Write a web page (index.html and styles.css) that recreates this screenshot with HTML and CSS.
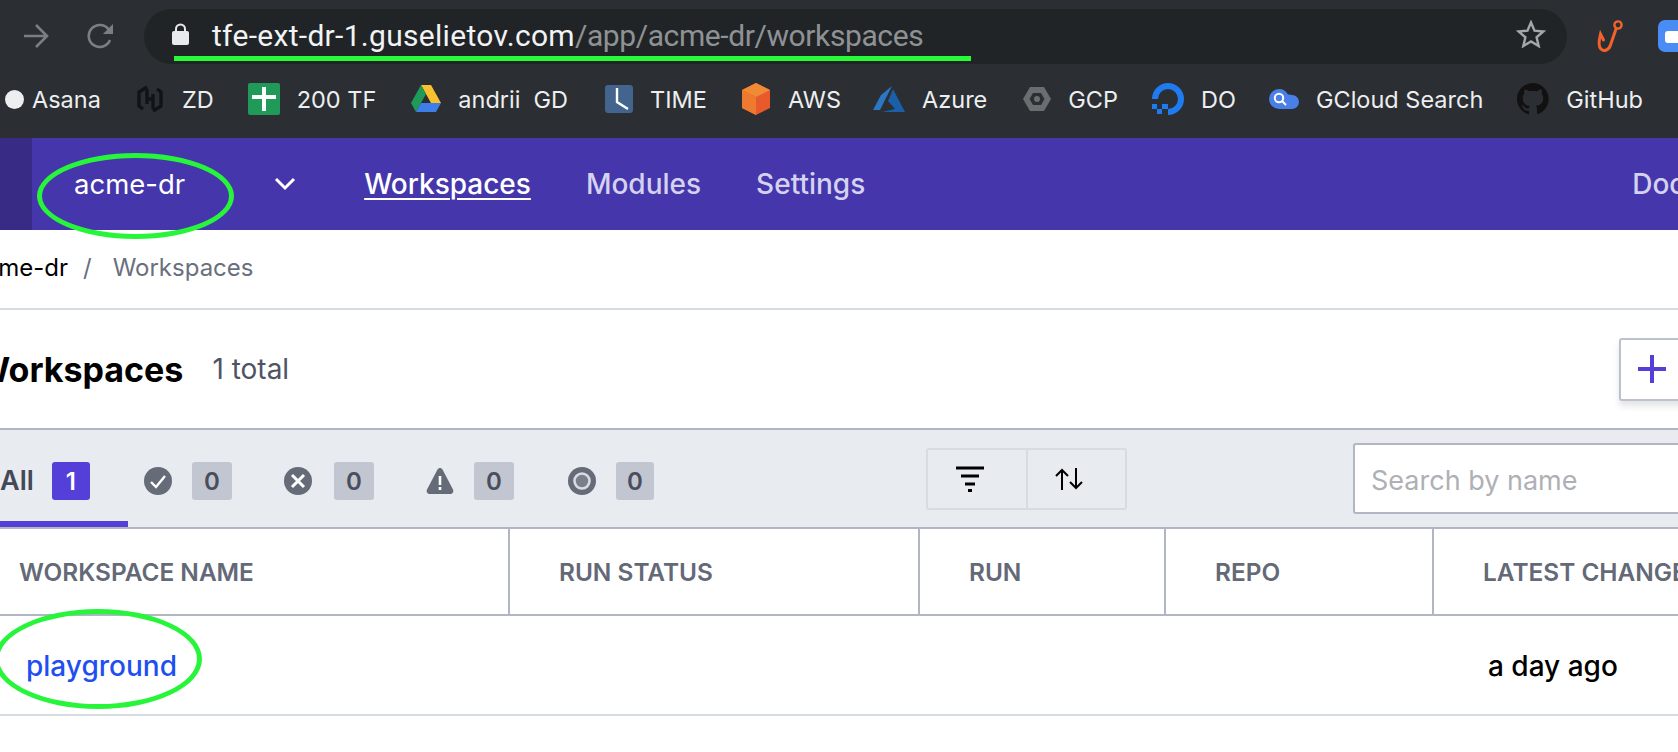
FILE: index.html
```html
<!DOCTYPE html>
<html lang="en">
<head>
    <meta charset="UTF-8">
    <meta name="viewport" content="width=device-width, initial-scale=1.0">
    <title>Workspaces</title>
    <link rel="stylesheet" href="styles.css">
</head>
<body>
    <header class="browser">
        <div class="toolbar">
            <svg class="tool-icon" width="28" height="26" viewBox="0 0 28 26"><path d="M2 13h23M14 2l11 11-11 11" fill="none" stroke="#7c7f82" stroke-width="2.6"/></svg>
            <svg class="tool-icon reload" width="28" height="26" viewBox="0 0 28 26"><path d="M23 17a11 11 0 1 1-1-10" fill="none" stroke="#7c7f82" stroke-width="2.6"/><path d="M26 1v10H16z" fill="#7c7f82"/></svg>
            <div class="urlbar">
                <svg class="lock" width="17" height="22" viewBox="0 0 17 22"><path d="M4 9V6a4.500 4.500 0 0 1 9 0v3" fill="none" stroke="#e8eaed" stroke-width="2"/><rect y="8" width="17" height="14" rx="2" fill="#e8eaed"/></svg>
                <span class="url"><span class="host">tfe-ext-dr-1.guselietov.com</span><span class="path">/app/acme-dr/workspaces</span></span>
                <svg class="star" width="30" height="28" viewBox="0 0 24 23"><path d="M12 2l2.900 6.800 7.300.6-5.600 4.800 1.700 7.200-6.300-3.800-6.300 3.800 1.700-7.200L1.800 9.400l7.300-.6z" fill="none" stroke="#a4a7aa" stroke-width="2"/></svg>
                <i class="url-mark"></i>
            </div>
            <svg class="hook" width="28" height="34" viewBox="0 0 28 34"><circle cx="23" cy="5" r="3.600" fill="none" stroke="#f2622a" stroke-width="2.400"/><path d="M21 9l-5.500 16c-1.500 5-6.500 7-9.500 4-3-2.500-2-9-.500-15l3 6" fill="none" stroke="#f2622a" stroke-width="3" stroke-linecap="round"/></svg>
            <div class="zoom-ext"><i></i></div>
        </div>
        <nav class="bookmarks">
            <a class="bm bm-asana"><i class="dot"></i>Asana</a>
            <a class="bm bm-zd"><svg width="30" height="30" viewBox="0 0 30 30"><path d="M12 3L4 8v14l4 3M12 5v15M18 10v15M12 15h6M18 27l8-5V8l-4-3" fill="none" stroke="#10141a" stroke-width="3.400"/></svg>ZD</a>
            <a class="bm bm-tf"><svg width="32" height="32" viewBox="0 0 32 32"><rect width="32" height="32" rx="2" fill="#1f9a58"/><path d="M4 12h24v4H4zM14 4h4v24h-4z" fill="#fff"/></svg>200 TF</a>
            <a class="bm bm-gd"><svg width="30" height="30" viewBox="0 0 30 30"><path d="M10 1h10l10 18H20z" fill="#fbc02d"/><path d="M10 1l5 9L5 28 0 19z" fill="#1f9a58"/><path d="M10 19h20l-5 9H5z" fill="#3f7ee8"/></svg>andrii&nbsp; GD</a>
            <a class="bm bm-time"><svg width="28" height="28" viewBox="0 0 28 28"><rect width="28" height="28" rx="3" fill="#43648c"/><path d="M12 3v14l11 7" fill="none" stroke="#fff" stroke-width="2.400"/></svg>TIME</a>
            <a class="bm bm-aws"><svg width="30" height="32" viewBox="0 0 30 32"><path d="M15 0l14 7v18l-14 7-14-7V7z" fill="#e85a2b"/><path d="M15 0l14 7-14 7L1 7z" fill="#f18a34"/><path d="M15 14v18L1 25V7z" fill="#ee7a30"/></svg>AWS</a>
            <a class="bm bm-azure"><svg width="32" height="26" viewBox="0 0 32 26"><path d="M19 0L8 9 0 24h7z" fill="#2b77c4"/><path d="M20 3l12 23H9l13-3-7-8z" fill="#1a5fa8"/></svg>Azure</a>
            <a class="bm bm-gcp"><svg width="28" height="26" viewBox="0 0 28 26"><path d="M7 1h14l7 12-7 12H7L0 13zM10 7l-3.500 6L10 19h8l3.500-6L18 7z" fill="#6b6e71" fill-rule="evenodd"/><circle cx="14" cy="13" r="3" fill="#6b6e71"/></svg>GCP</a>
            <a class="bm bm-do"><svg width="32" height="32" viewBox="0 0 32 32"><path d="M16 32v-6a10 10 0 1 0-10-10H0a16 16 0 1 1 16 16z" fill="#1f7cf0"/><path d="M16 26h-6v-5h6zM10 31H5v-5h5zM5 26H0v-5h5z" fill="#1f7cf0"/></svg>DO</a>
            <a class="bm bm-gs"><svg width="30" height="20" viewBox="0 0 30 20"><path d="M10 0a10 10 0 0 1 9 5.600A7 7 0 0 1 23 6a7 7 0 0 1 0 14H10a10 10 0 0 1 0-20z" fill="#4a7fe8"/><circle cx="10" cy="9" r="4.200" fill="none" stroke="#fff" stroke-width="2"/><path d="M13 12l4 4" stroke="#fff" stroke-width="2"/></svg>GCloud Search</a>
            <a class="bm bm-gh"><svg width="32" height="32" viewBox="0 0 16 16"><path d="M8 0a8 8 0 0 0-2.500 15.600c.4.1.5-.2.500-.4v-1.400c-2.200.5-2.700-1-2.700-1-.4-.9-.9-1.200-.9-1.200-.7-.5.100-.5.100-.5.800.1 1.200.8 1.200.8.700 1.200 1.900.9 2.300.7.100-.5.300-.9.500-1.100-1.800-.2-3.600-.9-3.600-4 0-.9.300-1.600.8-2.100-.1-.2-.4-1 .1-2.100 0 0 .7-.2 2.200.8a7.600 7.600 0 0 1 4 0c1.500-1 2.200-.8 2.200-.8.400 1.100.2 1.900.1 2.100.5.600.8 1.300.8 2.100 0 3.100-1.900 3.700-3.700 3.900.3.300.6.800.6 1.500v2.200c0 .2.100.5.600.4A8 8 0 0 0 8 0z" fill="#111"/></svg>GitHub</a>
        </nav>
    </header>

    <div class="topbar">
        <div class="topbar-edge"></div>
        <span class="org">acme-dr</span>
        <svg class="chevron" width="22" height="14" viewBox="0 0 22 14"><path d="M2 2l9 9 9-9" fill="none" stroke="#fff" stroke-width="3"/></svg>
        <a class="nav-link active">Workspaces</a>
        <a class="nav-link">Modules</a>
        <a class="nav-link">Settings</a>
        <a class="nav-link docs">Docs</a>
    </div>

    <div class="crumbs"><span class="crumb-org">acme-dr</span><span class="crumb-sep">/</span><span class="crumb-page">Workspaces</span></div>

    <div class="title-row">
        <h1>Workspaces</h1>
        <span class="total">1 total</span>
        <button class="add-btn"><svg width="30" height="30" viewBox="0 0 30 30"><path d="M15 1v28M1 15h28" stroke="#5440d8" stroke-width="4"/></svg></button>
    </div>

    <div class="filters">
        <div class="tab tab-all"><span class="tab-label">All</span><span class="count count-on">1</span></div>
        <div class="tab tab-ok">
            <svg width="28" height="28" viewBox="0 0 28 28"><circle cx="14" cy="14" r="14" fill="#666b78"/><path d="M7 15l5 5 9-11" fill="none" stroke="#fff" stroke-width="2.400"/></svg>
            <span class="count">0</span>
        </div>
        <div class="tab tab-err">
            <svg width="28" height="28" viewBox="0 0 28 28"><circle cx="14" cy="14" r="14" fill="#666b78"/><path d="M8 8l12 12M20 8L8 20" stroke="#fff" stroke-width="3"/></svg>
            <span class="count">0</span>
        </div>
        <div class="tab tab-warn">
            <svg width="28" height="28" viewBox="0 0 28 28"><path d="M14 1c1 0 2 .6 2.500 1.500l10.500 20c1 2-.3 4.500-2.500 4.500h-21C1.300 27 0 24.500 1 22.500l10.500-20C12 1.600 13 1 14 1z" fill="#666b78"/><path d="M14 9v9M14 20v3" stroke="#fff" stroke-width="2.600"/></svg>
            <span class="count">0</span>
        </div>
        <div class="tab tab-idle">
            <svg width="28" height="28" viewBox="0 0 28 28"><circle cx="14" cy="14" r="14" fill="#666b78"/><circle cx="14" cy="14" r="7.500" fill="#7a7f8b" stroke="#d8dbe1" stroke-width="2.600"/></svg>
            <span class="count">0</span>
        </div>
        <div class="btn-group">
            <div class="btn-cell"><svg width="28" height="26" viewBox="0 0 28 26"><path d="M0 2h28M5 10h18M9 18h10" stroke="#000" stroke-width="3"/><path d="M12 24.500h4" stroke="#000" stroke-width="3"/></svg></div>
            <div class="btn-cell"><svg width="28" height="22" viewBox="0 0 28 22"><path d="M7 22V2M1 8l6-6 6 6M21 0v20M15 14l6 6 6-6" fill="none" stroke="#000" stroke-width="2"/></svg></div>
        </div>
        <input class="search" type="text" placeholder="Search by name">
    </div>

    <div class="table-head">
        <div class="th th-name">WORKSPACE NAME</div>
        <div class="th th-status">RUN STATUS</div>
        <div class="th th-run">RUN</div>
        <div class="th th-repo">REPO</div>
        <div class="th th-change">LATEST CHANGE</div>
    </div>
    <div class="table-row">
        <a class="ws-link">playground</a>
        <span class="changed">a day ago</span>
    </div>

    <!-- hand drawn marks on top of the screenshot -->
    <i class="ring ring-org"></i>
    <i class="ring ring-ws"></i>
</body>
</html>
```

FILE: styles.css
```css
* {
    box-sizing: border-box;
}
body {
    margin: 0;
    width: 1678px;
    height: 752px;
    overflow: hidden;
    position: relative;
    background: #fff;
    font-family: 'Inter', 'Liberation Sans', sans-serif;
    color: #000;
}
svg {
    flex-shrink: 0;
    display: block;
}

/* browser chrome */
.browser {
    height: 138px;
    background: #2b2e32;
    overflow: hidden;
}
.toolbar {
    height: 73px;
    padding: 9px 0 0 22px;
    display: flex;
    align-items: flex-start;
}
.tool-icon {
    margin-top: 14px;
}
.reload {
    margin-left: 37px;
}
.urlbar {
    position: relative;
    margin-left: 29px;
    width: 1423px;
    height: 55px;
    flex-shrink: 0;
    background: #212427;
    border-radius: 28px;
    display: flex;
    align-items: center;
    padding: 0 21px 0 28px;
}
.lock {
    margin-top: -6px;
}
.url {
    margin-left: 23px;
    margin-top: -2px;
    font-family: 'Roboto', sans-serif;
    font-size: 30px;
    color: #8f9295;
    white-space: nowrap;
}
.host {
    color: #f1f3f4;
    letter-spacing: 0.3px;
}
.path {
    letter-spacing: -0.4px;
}
.star {
    margin-left: auto;
    margin-top: -6px;
}
.url-mark {
    position: absolute;
    left: 30px;
    bottom: 3px;
    width: 797px;
    height: 5px;
    background: #27fb38;
}
.hook {
    margin-left: 28px;
    margin-top: 11px;
}
.zoom-ext {
    margin-left: 35px;
    margin-top: 11px;
    width: 50px;
    height: 32px;
    flex-shrink: 0;
    background: #4a8cf6;
    border-radius: 7px;
    padding: 11px 0 0 7px;
}
.zoom-ext i {
    display: block;
    width: 30px;
    height: 12px;
    background: #fff;
    border-radius: 3px;
}
.bookmarks {
    height: 65px;
    display: flex;
    align-items: flex-start;
    padding: 10px 0 0 5px;
    font-size: 23.500px;
    color: #eceef0;
    white-space: nowrap;
}
.bm {
    height: 32px;
    display: flex;
    align-items: center;
    flex-shrink: 0;
}
.dot {
    width: 19px;
    height: 19px;
    border-radius: 50%;
    background: #eceef0;
    margin-right: 8px;
}
.bm svg {
    margin-right: 17px;
}
.bm-zd { margin-left: 34px; }
.bm-tf { margin-left: 34px; }
.bm-gd { margin-left: 35px; }
.bm-time { margin-left: 37px; }
.bm-aws { margin-left: 34px; }
.bm-azure { margin-left: 32px; }
.bm-gcp { margin-left: 36px; }
.bm-do { margin-left: 34px; }
.bm-gs { margin-left: 33px; }
.bm-gh { margin-left: 34px; }

/* product nav */
.topbar {
    height: 92px;
    background: #4537ab;
    display: flex;
    align-items: center;
    font-size: 28px;
    font-weight: 500;
    white-space: nowrap;
}
.topbar-edge {
    width: 32px;
    height: 92px;
    background: #372b86;
    flex-shrink: 0;
}
.org {
    margin-left: 42px;
    color: #fff;
    font-size: 27.500px;
    font-weight: 400;
}
.chevron {
    margin-left: 89px;
}
.nav-link {
    margin-left: 55px;
    color: #d5d2f0;
    flex-shrink: 0;
}
.nav-link.active {
    margin-left: 68px;
    color: #fff;
    text-decoration: underline;
    text-underline-offset: 4px;
    text-decoration-thickness: 2px;
}
.nav-link.docs {
    margin-left: 767px;
}

/* page */
.crumbs {
    height: 80px;
    padding-left: 0;
    margin-left: -29px;
    display: flex;
    align-items: center;
    padding-bottom: 4px;
    font-size: 24px;
    width: 1707px;
    border-bottom: 2px solid #d7dbe2;
}
.crumb-sep {
    margin: 0 21px 0 15px;
    color: #6a6f7d;
}
.crumb-page {
    color: #6a6f7d;
}
.title-row {
    height: 118px;
    margin-left: -25px;
    width: 1760px;
    display: flex;
    align-items: center;
}
h1 {
    margin: 0;
    font-size: 34px;
    font-weight: 700;
}
.total {
    margin-left: 29px;
    font-size: 28px;
    color: #4f5463;
}
.add-btn {
    margin-left: 1330px;
    width: 80px;
    height: 63px;
    padding: 0 0 0 16px;
    background: #fff;
    border: 2px solid #bdc1cd;
    border-radius: 3px;
    box-shadow: 0 5px 6px rgba(60, 65, 80, 0.14);
}
.filters {
    height: 101px;
    display: flex;
    align-items: flex-start;
    background: #e8ebf0;
    border-top: 2px solid #b1b5c4;
    border-bottom: 2px solid #b1b5c4;
    position: relative;
}
.tab {
    display: flex;
    align-items: center;
    height: 38px;
    margin-top: 32px;
}
.tab-all {
    width: 128px;
    height: 97px;
    margin-top: 0;
    padding: 0 0 0 0;
    align-items: flex-start;
    border-bottom: 6px solid #5440d8;
    flex-shrink: 0;
}
.tab-label {
    margin: 34px 18px 0 0;
    font-size: 27px;
    font-weight: 600;
    color: #444857;
}
.count {
    width: 40px;
    height: 38px;
    border-radius: 3px;
    background: #c2c6d1;
    color: #4a4e5c;
    font-size: 24px;
    font-weight: 600;
    display: flex;
    align-items: center;
    justify-content: center;
}
.count-on {
    width: 38px;
    margin-top: 32px;
    background: #5440d8;
    color: #fff;
}
.tab svg {
    margin-right: 20px;
}
.tab-ok { margin-left: 16px; }
.tab-err { margin-left: 52px; }
.tab-err svg { margin-right: 22px; }
.tab-warn { margin-left: 52px; }
.tab-idle { margin-left: 54px; }
.tab-idle .count { width: 38px; }
.btn-group {
    margin: 18px 0 0 272px;
    width: 201px;
    height: 62px;
    flex-shrink: 0;
    display: flex;
    border: 2px solid #d7dbe2;
    border-radius: 3px;
}
.btn-cell {
    flex: 1;
    display: flex;
    align-items: center;
    justify-content: center;
    padding-right: 14px;
}
.btn-cell + .btn-cell {
    border-left: 2px solid #d7dbe2;
}
.search {
    margin: 13px 0 0 226px;
    width: 400px;
    height: 71px;
    flex-shrink: 0;
    padding: 3px 16px 0;
    border: 2px solid #b1b5c4;
    border-radius: 3px;
    background: #fff;
    font-family: inherit;
    font-size: 27px;
}
.search::placeholder {
    color: #aeb0b5;
}
.table-head {
    height: 87px;
    display: grid;
    grid-template-columns: 508px 410px 246px 268px 1fr;
    border-bottom: 2px solid #b1b5c4;
    font-size: 24.400px;
    font-weight: 600;
    color: #646978;
    white-space: nowrap;
    overflow: hidden;
}
.th {
    display: flex;
    align-items: center;
    padding-left: 49px;
    border-left: 2px solid #b1b5c4;
}
.th-name {
    padding-left: 19px;
    border-left: 0;
}
.table-row {
    height: 100px;
    display: flex;
    align-items: center;
    border-bottom: 2px solid #d7dbe2;
    padding-top: 1px;
    font-size: 28px;
    font-weight: 500;
}
.ws-link {
    margin-left: 26px;
    color: #1f4ff0;
}
.changed {
    margin-left: 1311px;
    color: #000;
}

/* green marker circles */
.ring {
    position: absolute;
    border: 5px solid #27f53a;
    border-radius: 50%;
}
.ring-org {
    left: 37px;
    top: 153px;
    width: 197px;
    height: 86px;
}
.ring-ws {
    left: -6px;
    top: 609px;
    width: 208px;
    height: 100px;
}
```
